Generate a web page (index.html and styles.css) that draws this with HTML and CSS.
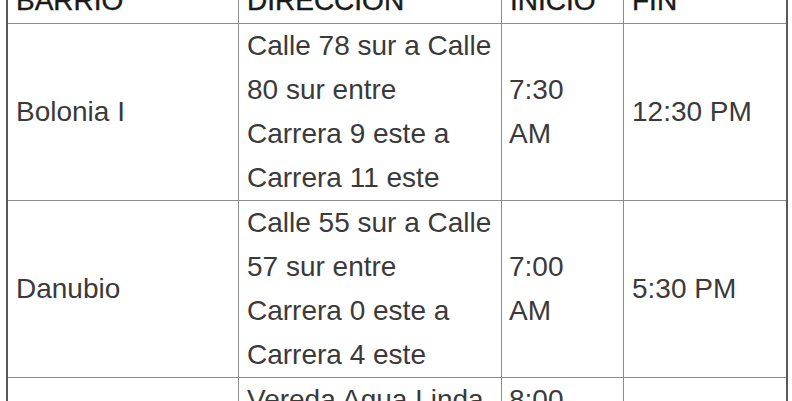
FILE: index.html
```html
<!DOCTYPE html>
<html lang="es">
<head>
<meta charset="utf-8">
<title>Cortes</title>
<link rel="stylesheet" href="styles.css">
</head>
<body>
<div class="wrap">
<table class="schedule">
<colgroup>
<col class="c1"><col class="c2"><col class="c3"><col class="c4">
</colgroup>
<thead>
<tr><th>BARRIO</th><th>DIRECCIÓN</th><th>INICIO</th><th class="last">FIN</th></tr>
</thead>
<tbody>
<tr><td>Bolonia I</td><td>Calle 78 sur a Calle 80 sur entre Carrera 9 este a Carrera 11 este</td><td class="time">7:30 AM</td><td class="last">12:30 PM</td></tr>
<tr><td>Danubio</td><td>Calle 55 sur a Calle 57 sur entre Carrera 0 este a Carrera 4 este</td><td class="time">7:00 AM</td><td class="last">5:30 PM</td></tr>
<tr><td>Usme</td><td>Vereda Agua Linda Sector Alto</td><td class="time">8:00 AM</td><td class="last">4:00 PM</td></tr>
</tbody>
</table>
</div>
</body>
</html>
```
FILE: styles.css
```css
html, body {
  margin: 0;
  padding: 0;
  background: #fff;
}
body {
  overflow: hidden;
}
.wrap {
  margin: -21px 0 0 6px;
}
.schedule {
  border-collapse: separate;
  border-spacing: 0;
  table-layout: fixed;
  width: 782px;
  border-left: 2px solid #5a5a5a;
  border-right: 2px solid #5a5a5a;
  font-family: "Liberation Sans", Arial, sans-serif;
  font-size: 28px;
  line-height: 44px;
  color: #3a3a3a;
}
.c1 { width: 231px; }
.c2 { width: 263px; }
.c3 { width: 122px; }
.c4 { width: 162px; }
.schedule th,
.schedule td {
  padding: 0 2px 0 8px;
  border-right: 1px solid #8c8c8c;
  border-bottom: 1px solid #8c8c8c;
  vertical-align: middle;
  text-align: left;
}
.schedule td.time {
  padding-left: 7px;
  padding-right: 14px;
}
.schedule th {
  font-weight: normal;
  color: #1a1a1a;
  -webkit-text-stroke: 0.4px #1a1a1a;
}
.schedule .last {
  border-right: 0;
}
```
